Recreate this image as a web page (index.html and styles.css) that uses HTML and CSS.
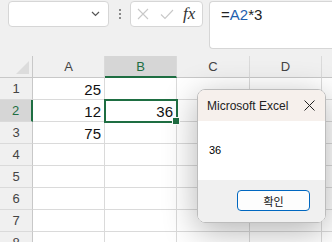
FILE: index.html
```html
<!DOCTYPE html>
<html lang="ko">
<head>
    <meta charset="UTF-8">
    <title>Excel</title>
    <link rel="stylesheet" href="styles.css">
</head>
<body>
    <div class="toolbar">
        <div class="name-box">
            <svg class="chevron" width="9" height="6" viewBox="0 0 9 6"><path d="M1 1 L4.5 4.5 L8 1" fill="none" stroke="#555" stroke-width="1.2"/></svg>
        </div>
        <div class="dots"><span></span><span></span><span></span></div>
        <div class="fx-box">
            <svg width="12" height="12" viewBox="0 0 12 12"><path d="M1 1 L11 11 M11 1 L1 11" stroke="#c8c8c8" stroke-width="1.1"/></svg>
            <svg width="14" height="11" viewBox="0 0 14 11"><path d="M1 5.5 L5 9.5 L13 1" fill="none" stroke="#c8c8c8" stroke-width="1.1"/></svg>
            <span class="fx">fx</span>
        </div>
        <div class="formula">=<span class="ref">A2</span>*3</div>
    </div>

    <div class="sheet">
        <div class="grid">
            <div class="corner"><span class="tri"></span></div>
            <div class="col-head">A</div>
            <div class="col-head active">B</div>
            <div class="col-head">C</div>
            <div class="col-head">D</div>
            <div class="col-head"></div>

            <div class="row-head">1</div>
            <div class="cell">25</div><div class="cell"></div><div class="cell"></div><div class="cell"></div><div class="cell"></div>

            <div class="row-head active">2</div>
            <div class="cell">12</div><div class="cell selected">36<span class="handle"></span></div><div class="cell"></div><div class="cell"></div><div class="cell"></div>

            <div class="row-head">3</div>
            <div class="cell">75</div><div class="cell"></div><div class="cell"></div><div class="cell"></div><div class="cell"></div>

            <div class="row-head">4</div>
            <div class="cell"></div><div class="cell"></div><div class="cell"></div><div class="cell"></div><div class="cell"></div>

            <div class="row-head">5</div>
            <div class="cell"></div><div class="cell"></div><div class="cell"></div><div class="cell"></div><div class="cell"></div>

            <div class="row-head">6</div>
            <div class="cell"></div><div class="cell"></div><div class="cell"></div><div class="cell"></div><div class="cell"></div>

            <div class="row-head">7</div>
            <div class="cell"></div><div class="cell"></div><div class="cell"></div><div class="cell"></div><div class="cell"></div>

            <div class="row-head">8</div>
            <div class="cell"></div><div class="cell"></div><div class="cell"></div><div class="cell"></div><div class="cell"></div>
        </div>

        <div class="dialog">
            <div class="dialog-title">
                <span>Microsoft Excel</span>
                <svg width="11" height="11" viewBox="0 0 11 11"><path d="M0.5 0.5 L10.5 10.5 M10.5 0.5 L0.5 10.5" stroke="#222" stroke-width="1"/></svg>
            </div>
            <div class="dialog-body">36</div>
            <div class="dialog-foot">
                <button class="ok">확인</button>
            </div>
        </div>
    </div>
</body>
</html>
```
FILE: styles.css
```css
body {
  margin: 0;
  background: #f0f0f0;
  font-family: "Liberation Sans", Arial, sans-serif;
  overflow: hidden;
}

.toolbar {
  display: flex;
  align-items: flex-start;
  height: 56px;
  padding: 1px 0 0 8px;
  box-sizing: border-box;
}

.name-box {
  width: 101px;
  height: 26px;
  box-sizing: border-box;
  background: #fff;
  border: 1px solid #d6d6d6;
  border-radius: 4px;
  display: flex;
  align-items: center;
  justify-content: flex-end;
  padding-right: 8px;
}

.dots {
  width: 21px;
  height: 26px;
  display: flex;
  flex-direction: column;
  align-items: center;
  justify-content: center;
  gap: 2px;
}

.dots span {
  width: 2px;
  height: 2px;
  background: #8a8a8a;
}

.fx-box {
  width: 73px;
  height: 26px;
  box-sizing: border-box;
  background: #fff;
  border: 1px solid #d6d6d6;
  border-radius: 4px;
  display: flex;
  align-items: center;
  padding-left: 6px;
  gap: 11px;
}

.fx {
  font-family: "Liberation Serif", serif;
  font-style: italic;
  font-size: 17px;
  color: #333;
  margin-left: -2px;
}

.formula {
  margin-left: 6px;
  flex: 1;
  height: 48px;
  box-sizing: border-box;
  background: #fff;
  border: 1px solid #d6d6d6;
  border-right: none;
  border-radius: 4px 0 0 4px;
  padding: 4px 0 0 11px;
  font-size: 15px;
  color: #222;
}

.ref {
  color: #1e5fb0;
}

.sheet {
  position: relative;
}

.grid {
  display: grid;
  grid-template-columns: 33px 72px 72px 73px 72px 20px;
  grid-auto-rows: 22px;
  background: #fff;
}

.corner,
.col-head,
.row-head {
  background: #f0f0f0;
  color: #444;
  font-size: 13px;
  display: flex;
  align-items: center;
  justify-content: center;
  box-sizing: border-box;
}

.corner {
  border-right: 1px solid #c8c8c8;
  border-bottom: 1px solid #c8c8c8;
  position: relative;
}

.tri {
  position: absolute;
  right: 3px;
  bottom: 3px;
  width: 0;
  height: 0;
  border-left: 13px solid transparent;
  border-bottom: 13px solid #dcdcdc;
}

.col-head {
  border-right: 1px solid #dadada;
  border-bottom: 1px solid #c8c8c8;
}

.col-head.active {
  background: #d6d6d6;
  border-bottom: 2px solid #1e6e42;
  color: #1e6e42;
}

.row-head {
  border-right: 1px solid #c8c8c8;
  border-bottom: 1px solid #dadada;
}

.row-head.active {
  background: #d6d6d6;
  border-right: 2px solid #1e6e42;
  color: #1e6e42;
}

.cell {
  border-right: 1px solid #dadada;
  border-bottom: 1px solid #dadada;
  font-size: 15px;
  color: #111;
  text-align: right;
  padding: 2px 3px 0 0;
  box-sizing: border-box;
  line-height: 19px;
  position: relative;
}

.cell.selected {
  outline: 2px solid #1e6e42;
  outline-offset: -1px;
  z-index: 1;
}

.handle {
  position: absolute;
  right: -4px;
  bottom: -4px;
  width: 6px;
  height: 6px;
  background: #1e6e42;
  border: 1px solid #fff;
}

.dialog {
  position: absolute;
  left: 197px;
  top: 33px;
  width: 127px;
  height: 132px;
  border: 1px solid #bcbcbc;
  border-radius: 8px;
  overflow: hidden;
  box-shadow: 0 8px 34px rgba(0, 0, 0, 0.3);
  display: flex;
  flex-direction: column;
  z-index: 2;
}

.dialog-title {
  height: 31px;
  background: #f6f0ec;
  display: flex;
  align-items: center;
  justify-content: space-between;
  padding: 0 10px 0 9px;
  font-size: 12px;
  color: #222;
}

.dialog-body {
  height: 59px;
  background: #fff;
  font-size: 11px;
  padding: 23px 0 0 11px;
  box-sizing: border-box;
  color: #000;
}

.dialog-foot {
  flex: 1;
  background: #f0f0f0;
  display: flex;
  justify-content: flex-end;
  padding: 10px 15px 0 0;
}

.ok {
  width: 73px;
  height: 21px;
  background: #fdfdfd;
  border: 1px solid #0067c0;
  border-radius: 4px;
  font-family: "Noto Sans CJK KR", sans-serif;
  font-size: 11px;
  color: #111;
  padding: 0;
  line-height: 18px;
}
```
